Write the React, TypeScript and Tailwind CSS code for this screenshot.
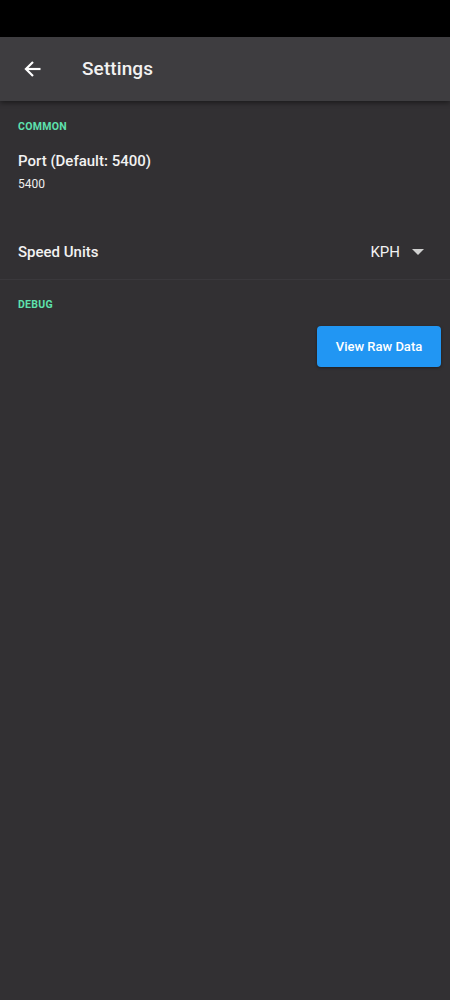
import React from "react";

export default function App() {
  return (
    <div className="w-[450px] h-[1000px] bg-[#323033] flex flex-col" style={{ fontFamily: "Roboto, 'Noto Sans', sans-serif" }}>
      <div className="h-[37px] bg-black shrink-0" />
      <div className="h-[64px] bg-[#3e3d40] flex items-center shrink-0 shadow-[0_2px_5px_rgba(0,0,0,0.45)] relative z-10">
        <div className="w-[64px] flex justify-center pl-[1px]">
          <svg width="20" height="20" viewBox="0 0 24 24" fill="none" stroke="white" strokeWidth="2.6" strokeLinecap="butt" strokeLinejoin="miter">
            <path d="M21 12H4" />
            <path d="M12 3.5L3.5 12L12 20.5" />
          </svg>
        </div>
        <div className="ml-[18px] text-[19px] font-medium text-[#f2f2f2] tracking-[0.1px]">Settings</div>
      </div>
      <div className="flex flex-col">
        <div className="px-[18px] pt-[19px] text-[10.5px] font-bold text-[#5ee2ae] tracking-[0.3px] leading-[14px]">COMMON</div>
        <div className="px-[18px] pt-[17px] text-[15px] font-medium text-[#f2f2f2] leading-[20px]">Port (Default: 5400)</div>
        <div className="px-[18px] pt-[5px] text-[12px] text-[#eeeeee] leading-[16px]">5400</div>
        <div className="h-[35px]" />
        <div className="h-[53px] px-[18px] flex items-center justify-between border-b border-[#3a383c]">
          <div className="text-[15px] font-medium text-[#f2f2f2] pb-[2px]">Speed Units</div>
          <div className="flex items-center pr-[8px] pb-[2px]">
            <span className="text-[15px] text-[#f2f2f2]">KPH</span>
            <svg className="ml-[12px]" width="12" height="6" viewBox="0 0 12 6">
              <path d="M0 0H12L6 6Z" fill="#d0d0d0" />
            </svg>
          </div>
        </div>
        <div className="px-[18px] pt-[18px] text-[10.5px] font-bold text-[#5ee2ae] tracking-[0.3px] leading-[14px]">DEBUG</div>
        <div className="flex justify-end pr-[9px] pt-[14px]">
          <button className="w-[124px] h-[41px] rounded-[4px] bg-[#2196f3] text-white text-[13px] font-medium shadow-[0_1px_3px_rgba(0,0,0,0.4)]">
            View Raw Data
          </button>
        </div>
      </div>
    </div>
  );
}
